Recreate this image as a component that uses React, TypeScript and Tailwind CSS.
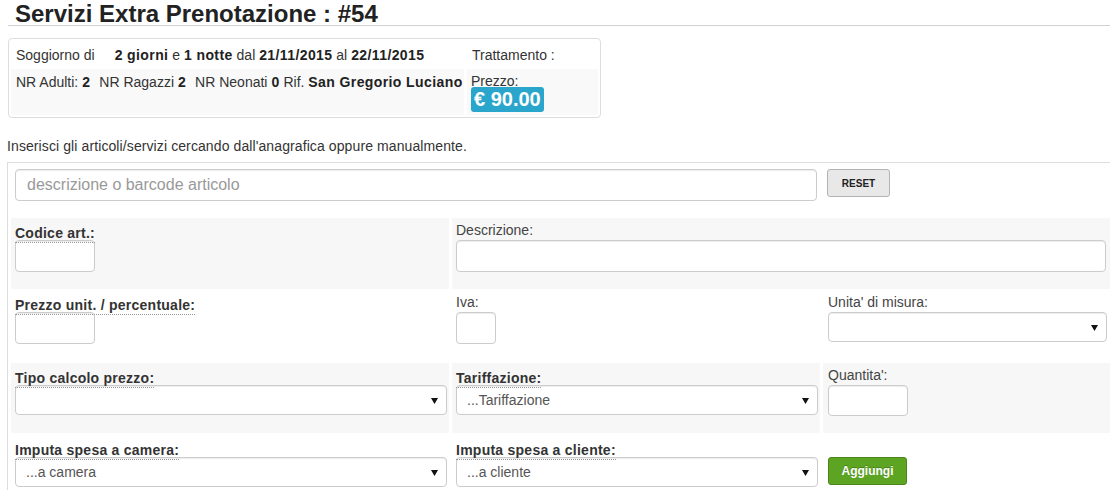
import React from 'react';

// Small dropdown arrow like the native select one
const Arrow = () => (
  <svg width="7" height="7" viewBox="0 0 7 7" className="shrink-0">
    <polygon points="0,1 7,1 3.5,7" fill="#111" />
  </svg>
);

const Select = ({ className, text }: { className: string; text?: string }) => (
  <div
    className={`flex items-center justify-between rounded-[4px] border border-[#ccc] bg-white pl-[10px] pr-[8px] text-[14px] text-[#555] shadow-[inset_0_1px_1px_rgba(0,0,0,0.075)] ${className}`}
  >
    <span>{text ?? ''}</span>
    <Arrow />
  </div>
);

const Input = ({ className }: { className: string }) => (
  <div className={`rounded-[4px] border border-[#ccc] bg-white shadow-[inset_0_1px_1px_rgba(0,0,0,0.075)] ${className}`} />
);

const BoldLabel = ({ children }: { children: React.ReactNode }) => (
  <div className="h-[19px]">
    <span className="inline-block border-b border-dotted border-[#999] text-[14px] font-bold leading-[18px] tracking-[0.25px] text-[#333]">
      {children}
    </span>
  </div>
);

const Label = ({ children }: { children: React.ReactNode }) => (
  <div className="h-[19px] text-[14px] leading-[18px] text-[#444]">{children}</div>
);

const B = ({ children }: { children: React.ReactNode }) => (
  <b className="tracking-[0.4px] text-[#222]">{children}</b>
);

export default function App() {
  return (
    <div className="h-[490px] w-[1110px] overflow-hidden bg-white font-['Liberation_Sans',Arial,sans-serif] text-[#333]">
      {/* page title */}
      <div className="ml-[8px] h-[26px] border-b border-[#d0d0d0] pl-[7px] pt-[1px]">
        <h1 className="text-[24px] font-bold leading-[25px] text-[#222]">Servizi Extra Prenotazione : #54</h1>
      </div>

      {/* booking summary */}
      <div className="ml-[8px] mt-[12px] w-[593px] rounded-[4px] border border-[#ddd] p-[2px] text-[14px]">
        <div className="grid grid-cols-[453px_1fr] grid-rows-[28px_46px] gap-x-[3px]">
          <div className="flex items-center pl-[5px]">
            <span>Soggiorno di</span>
            <span className="ml-[20px]">
              <B>2 giorni</B> e <B>1 notte</B> dal <B>21/11/2015</B> al <B>22/11/2015</B>
            </span>
          </div>
          <div className="flex items-center pl-[5px]">Trattamento :</div>
          <div className="bg-[#f9f9f9] pl-[5px] pt-[5px] leading-[16px]">
            NR Adulti: <B>2</B>
            <span className="ml-[9px]">
              NR Ragazzi <B>2</B>
            </span>
            <span className="ml-[9px]">
              NR Neonati <B>0</B>
            </span>{' '}
            Rif. <B>San Gregorio Luciano</B>
          </div>
          <div className="bg-[#f9f9f9] pl-[4px] pt-[4px]">
            <div className="leading-[16px]">Prezzo:</div>
            <span className="-mt-[2px] inline-block h-[25px] rounded-[3px] bg-[#2aa6cc] px-[3px] text-[20px] font-bold leading-[25px] text-white">
              € 90.00
            </span>
          </div>
        </div>
      </div>

      <p className="ml-[7px] mt-[18px] text-[14px] leading-[20px] tracking-[0.1px]">
        Inserisci gli articoli/servizi cercando dall'anagrafica oppure manualmente.
      </p>

      {/* articles form */}
      <div className="ml-[7px] mt-[6px] border-l border-t border-[#ddd]">
        <div className="flex items-start pl-[7px] pt-[6px]">
          <div className="flex h-[32px] w-[802px] items-center rounded-[4px] border border-[#ccc] bg-white pl-[11px] text-[16px] text-[#999] shadow-[inset_0_1px_1px_rgba(0,0,0,0.075)]">
            descrizione o barcode articolo
          </div>
          <button className="ml-[10px] h-[28px] w-[63px] rounded-[3px] border border-[#b3b3b3] bg-[#e8e8e8] text-[10px] font-bold text-[#222]">
            RESET
          </button>
        </div>

        <div className="ml-[3px] mt-[17px] grid w-[1100px] grid-cols-[438px_368px_288px] grid-rows-[71px_74px_70px_60px] gap-x-[3px]">
          {/* row 1 */}
          <div className="bg-[#f7f7f7] pl-[4px] pt-[3px]">
            <BoldLabel>Codice art.:</BoldLabel>
            <Input className="h-[32px] w-[80px]" />
          </div>
          <div className="col-span-2 bg-[#f7f7f7] pl-[4px] pt-[3px]">
            <Label>Descrizione:</Label>
            <Input className="h-[32px] w-[650px]" />
          </div>

          {/* row 2 */}
          <div className="pl-[4px] pt-[4px]">
            <BoldLabel>Prezzo unit. / percentuale:</BoldLabel>
            <Input className="h-[32px] w-[80px]" />
          </div>
          <div className="pl-[4px] pt-[4px]">
            <Label>Iva:</Label>
            <Input className="h-[32px] w-[40px]" />
          </div>
          <div className="pl-[5px] pt-[4px]">
            <Label>Unita' di misura:</Label>
            <Select className="h-[30px] w-[279px]" />
          </div>

          {/* row 3 */}
          <div className="bg-[#f7f7f7] pl-[4px] pt-[3px]">
            <BoldLabel>Tipo calcolo prezzo:</BoldLabel>
            <Select className="h-[30px] w-[432px]" />
          </div>
          <div className="bg-[#f7f7f7] pl-[4px] pt-[3px]">
            <BoldLabel>Tariffazione:</BoldLabel>
            <Select className="h-[30px] w-[362px]" text="...Tariffazione" />
          </div>
          <div className="bg-[#f7f7f7] pl-[5px] pt-[3px]">
            <Label>Quantita':</Label>
            <Input className="h-[31px] w-[80px]" />
          </div>

          {/* row 4 */}
          <div className="pl-[4px] pt-[5px]">
            <BoldLabel>Imputa spesa a camera:</BoldLabel>
            <Select className="h-[30px] w-[432px]" text="...a camera" />
          </div>
          <div className="pl-[4px] pt-[5px]">
            <BoldLabel>Imputa spesa a cliente:</BoldLabel>
            <Select className="h-[30px] w-[362px]" text="...a cliente" />
          </div>
          <div className="pl-[5px] pt-[24px]">
            <button className="h-[28px] w-[79px] rounded-[3px] border border-[#4a861c] bg-[#5da423] text-[12px] font-bold text-white [text-shadow:0_-1px_0_rgba(0,0,0,0.25)]">
              Aggiungi
            </button>
          </div>
        </div>
      </div>
    </div>
  );
}
